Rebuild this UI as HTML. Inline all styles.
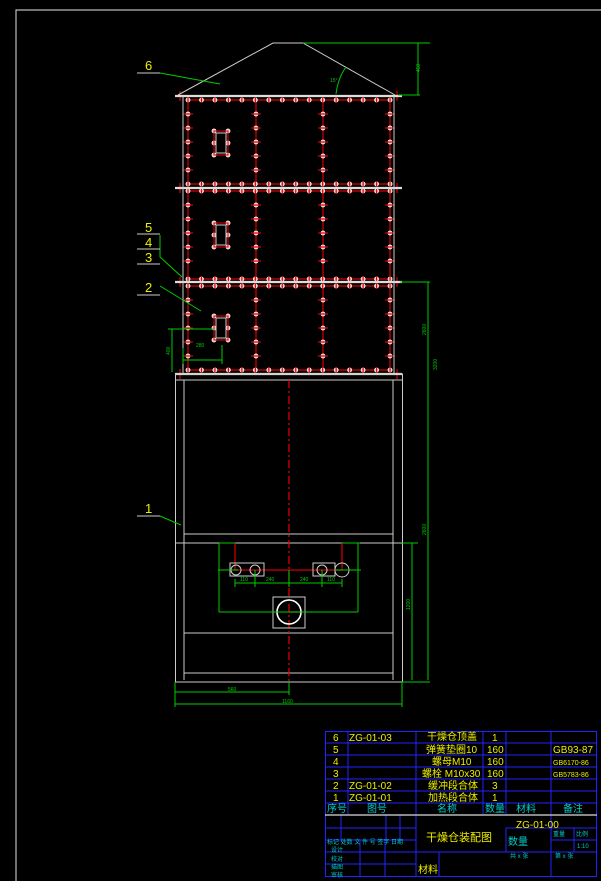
<!DOCTYPE html>
<html><head><meta charset="utf-8"><style>
html,body{margin:0;padding:0;background:#000;}
svg{display:block}
text{font-family:"Liberation Sans","Noto Sans CJK SC",sans-serif;}
</style></head><body>
<svg id="s" width="601" height="881" viewBox="0 0 601 881" xmlns="http://www.w3.org/2000/svg">
<rect width="601" height="881" fill="#000"/>
<path d="M16,881 V10 H601" stroke="#bbb" stroke-width="1.2" fill="none"/>
<g id="bolts"></g>
<path d="M178,95 L273,43 H303 L395,95" stroke="#ccc" stroke-width="1" fill="none"/>
<g stroke="#ddd" stroke-width="2.2">
<line x1="175" y1="96" x2="402" y2="96"/>
<line x1="175" y1="188" x2="402" y2="188"/>
<line x1="175" y1="282" x2="402" y2="282"/>
<line x1="175" y1="374" x2="402" y2="374"/>
</g>
<g stroke="#ccc" stroke-width="1" fill="none">
<line x1="183" y1="96" x2="183" y2="374"/>
<line x1="394" y1="96" x2="394" y2="374"/>
<rect x="175.5" y="374" width="227" height="308"/>
<line x1="184" y1="380" x2="184" y2="680"/>
<line x1="393" y1="380" x2="393" y2="680"/>
<line x1="175" y1="380" x2="402" y2="380"/>
<line x1="184" y1="534" x2="393" y2="534"/>
<line x1="175" y1="543" x2="402" y2="543"/>
<line x1="184" y1="633" x2="393" y2="633"/>
<line x1="184" y1="673" x2="393" y2="673"/>
</g>
<g stroke="#ccc" stroke-width="1" fill="none">
<rect x="216" y="133" width="10" height="20"/>
<rect x="216" y="225" width="10" height="20"/>
<rect x="216" y="318" width="10" height="20"/>
</g>
<g stroke="#e00" stroke-width="1" fill="none">
<rect x="214" y="131" width="14" height="24"/>
<rect x="214" y="223" width="14" height="24"/>
<rect x="214" y="316" width="14" height="24"/>
</g>
<line x1="289" y1="380" x2="289" y2="682" stroke="#e00" stroke-width="1.2" stroke-dasharray="8,3,2,3"/>
<g stroke="#c00" stroke-width="1.3" fill="none">
<line x1="235" y1="543" x2="235" y2="570"/>
<line x1="342" y1="543" x2="342" y2="570"/>
<line x1="235" y1="570" x2="342" y2="570"/>
<line x1="289" y1="612" x2="302" y2="612"/>
</g>
<g stroke="#ccc" stroke-width="1" fill="none">
<rect x="230" y="563" width="34" height="13"/>
<rect x="313" y="563" width="22" height="13"/>
<circle cx="236" cy="570" r="5"/><circle cx="255" cy="570" r="5"/>
<circle cx="322" cy="570" r="5"/><circle cx="342" cy="570" r="7"/>
<rect x="273" y="597" width="32" height="31"/>
<circle cx="289" cy="612" r="12" stroke-width="1.6" stroke="#fff"/>
</g>
<g stroke="#0c0" stroke-width="1" fill="none">
<path d="M303,43 H430 M418,43 V95 M398,95 H420"/>
<path d="M336,94 Q338,78 346,67"/>
<path d="M400,282 H430 M428,282 V680 M402,543 H418 M412,543 V680 M402,682 H430"/>
<path d="M175,682 V707 M289,682 V695 M402,682 V707 M175,692 H289 M175,704 H402"/>
<path d="M168,329 H214 M172,329 V372 M183,348 V364 M183,360 H222 M222,345 V364"/>
<path d="M219,543 H235 M219,543 V612 M219,612 H358 M358,543 V612 M342,543 H360 M218,570 H238 M335,570 H361 M235,583 H342 M235,579 V587 M342,579 V587 M255,570 V587 M289,570 V587 M322,570 V587"/>
<path d="M160,73 L220,84 M160,235 V257 L182,277 M160,286 L201,311 M160,516 L181,525"/>
</g>
<g fill="#0c0" font-size="5">
<text x="420" y="72" transform="rotate(-90 420 72)">450</text>
<text x="330" y="82">15°</text>
<text x="426" y="335" transform="rotate(-90 426 335)">2600</text>
<text x="437" y="370" transform="rotate(-90 437 370)">3200</text>
<text x="426" y="535" transform="rotate(-90 426 535)">2600</text>
<text x="410" y="610" transform="rotate(-90 410 610)">1200</text>
<text x="228" y="691">560</text><text x="282" y="703">1160</text>
<text x="196" y="347">280</text>
<text x="170" y="355" transform="rotate(-90 170 355)">400</text>
<text x="240" y="581">110</text><text x="266" y="581">240</text><text x="300" y="581">240</text><text x="327" y="581">110</text>
</g>
<g stroke="#ccc" stroke-width="1">
<line x1="137" y1="73" x2="160" y2="73"/>
<line x1="137" y1="234" x2="160" y2="234"/>
<line x1="137" y1="249" x2="160" y2="249"/>
<line x1="137" y1="264" x2="160" y2="264"/>
<line x1="137" y1="295" x2="160" y2="295"/>
<line x1="137" y1="516" x2="160" y2="516"/>
</g>
<g fill="#ee0" font-size="13">
<text x="145" y="70">6</text>
<text x="145" y="232">5</text>
<text x="145" y="247">4</text>
<text x="145" y="262">3</text>
<text x="145" y="292">2</text>
<text x="145" y="513">1</text>
</g>
<g stroke="#22f" stroke-width="1" fill="none">
<rect x="325.5" y="731.5" width="271" height="145"/>
<path d="M325,743H597M325,755H597M325,767H597M325,779H597M325,791H597M325,803H597"/>
<path d="M348,731V814M416,731V814M483,731V814M506,731V814M551,731V814"/>
<path d="M325,828H416M325,840H416M325,852H416M325,864H416M341,815V840M386,815V840M400,815V840M416,815V877M360,840V877M385,840V877M416,852H597M439,852V877M506,828H597M506,828V852M551,815V877M574,828V852M551,840H597"/>
</g>
<line x1="325" y1="815" x2="597" y2="815" stroke="#ddd" stroke-width="1.2"/>
<g fill="#ee0" font-size="10">
<text x="333" y="741">6</text><text x="349" y="741">ZG-01-03</text><text x="427" y="740">干燥仓顶盖</text><text x="492" y="741">1</text>
<text x="333" y="753">5</text><text x="426" y="753">弹簧垫圈10</text><text x="487" y="753">160</text><text x="553" y="753">GB93-87</text>
<text x="333" y="765">4</text><text x="432" y="765">螺母M10</text><text x="487" y="765">160</text><text x="553" y="765" font-size="7">GB6170-86</text>
<text x="333" y="777">3</text><text x="422" y="777">螺栓 M10x30</text><text x="487" y="777">160</text><text x="553" y="777" font-size="7">GB5783-86</text>
<text x="333" y="789">2</text><text x="349" y="789">ZG-01-02</text><text x="428" y="789">缓冲段合体</text><text x="492" y="789">3</text>
<text x="333" y="801">1</text><text x="349" y="801">ZG-01-01</text><text x="428" y="801">加热段合体</text><text x="492" y="801">1</text>
<text x="516" y="828">ZG-01-00</text>
<text x="426" y="841" font-size="11">干燥仓装配图</text>
<text x="418" y="873">材料</text>
</g>
<g fill="#0cc" font-size="10">
<text x="327" y="812">序号</text><text x="367" y="812">图号</text><text x="437" y="812">名称</text><text x="485" y="812">数量</text><text x="516" y="812">材料</text><text x="563" y="812">备注</text>
<text x="508" y="845">数量</text>
</g>
<g fill="#0cc" font-size="6">
<text x="327" y="844">标记 处数 文 件 号 签字 日期</text>
<text x="331" y="852">设计</text><text x="331" y="861">校对</text><text x="331" y="869">描图</text><text x="331" y="877">审核</text>
<text x="553" y="836">重量</text><text x="576" y="836">比例</text><text x="577" y="848">1:10</text>
<text x="510" y="858">共  x  张</text><text x="555" y="858">第  x  张</text>
</g>
</svg>
<script>
(function(){
var g=document.getElementById('bolts'),h='';
function L(x1,y1,x2,y2){h+='<line x1="'+x1+'" y1="'+y1+'" x2="'+x2+'" y2="'+y2+'" stroke="#d00" stroke-width="1.2"/>';}
function C(x,y){h+='<circle cx="'+x+'" cy="'+y+'" r="2.1" fill="#f4c0c0" stroke="#fff" stroke-width="0.6"/>';}
var secs=[[100,184],[191,279],[286,370]];
var vx=[188,256,323,390];
secs.forEach(function(s){
 var t=s[0],b=s[1];
 L(186,t,392,t);L(186,b,392,b);
 vx.forEach(function(x){L(x,t,x,b);});
 for(var i=0;i<16;i++){var x=188+i*13.47;C(x,t);C(x,b);L(x,t-3,x,t+3);L(x,b-3,x,b+3);}
 vx.forEach(function(x){for(var y=t+14;y<b-6;y+=14){C(x,y);L(x-5,y,x+5,y);}});
});
[[214,131],[228,131],[214,143],[228,143],[214,155],[228,155],[214,223],[228,223],[214,235],[228,235],[214,247],[228,247],[214,316],[228,316],[214,328],[228,328],[214,340],[228,340]].forEach(function(p){C(p[0],p[1]);});
[[180,96],[397,96],[180,188],[397,188],[180,282],[397,282],[180,374],[397,374]].forEach(function(p){L(p[0],p[1]-5,p[0],p[1]+5);});
g.innerHTML=h;
})();
</script>
</body></html>
